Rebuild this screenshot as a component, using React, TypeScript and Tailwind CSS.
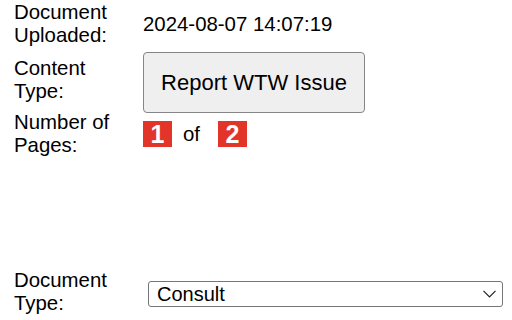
import React from "react";

export default function App() {
  return (
    <div className="w-[512px] h-[320px] overflow-hidden bg-white pl-[14px] font-['Liberation_Sans',Arial,sans-serif] text-[20.4px] leading-[23px] text-black">
      <div className="flex items-center h-[46px] mt-[1px]">
        <div className="w-[129px]">
          <div>Document</div>
          <div>Uploaded:</div>
        </div>
        <div>2024-08-07 14:07:19</div>
      </div>
      <div className="flex items-start mt-[5px]">
        <div className="w-[129px] mt-[5px]">
          <div>Content</div>
          <div>Type:</div>
        </div>
        <button className="w-[222px] h-[61px] rounded-[4px] border border-[#858585] bg-[#efefef] text-[22px] leading-[25px] text-black">
          Report WTW Issue
        </button>
      </div>
      <div className="flex items-center h-[46px] -mt-[2px]">
        <div className="w-[129px]">
          <div>Number of</div>
          <div>Pages:</div>
        </div>
        <div className="flex items-center">
          <span className="flex w-[29px] h-[26px] items-center justify-center bg-[#e3342a] text-white font-bold text-[25px] leading-none">1</span>
          <span className="ml-[11px]">of</span>
          <span className="ml-[18px] flex w-[29px] h-[26px] items-center justify-center bg-[#e3342a] text-white font-bold text-[25px] leading-none">2</span>
        </div>
      </div>
      <div className="flex items-center h-[46px] mt-[112px]">
        <div className="w-[134px]">
          <div>Document</div>
          <div>Type:</div>
        </div>
        <div className="relative w-[355px] h-[26px] mt-[4px] rounded-[3px] border border-[#767676] bg-white flex items-center pl-[8px] text-[20px]">
          <span>Consult</span>
          <svg className="absolute right-[6px] top-[8px]" width="13" height="8" viewBox="0 0 13 8" fill="none">
            <polyline points="0.5,0.8 6.5,6.8 12.5,0.8" stroke="#222" strokeWidth="1.2" />
          </svg>
        </div>
      </div>
    </div>
  );
}
